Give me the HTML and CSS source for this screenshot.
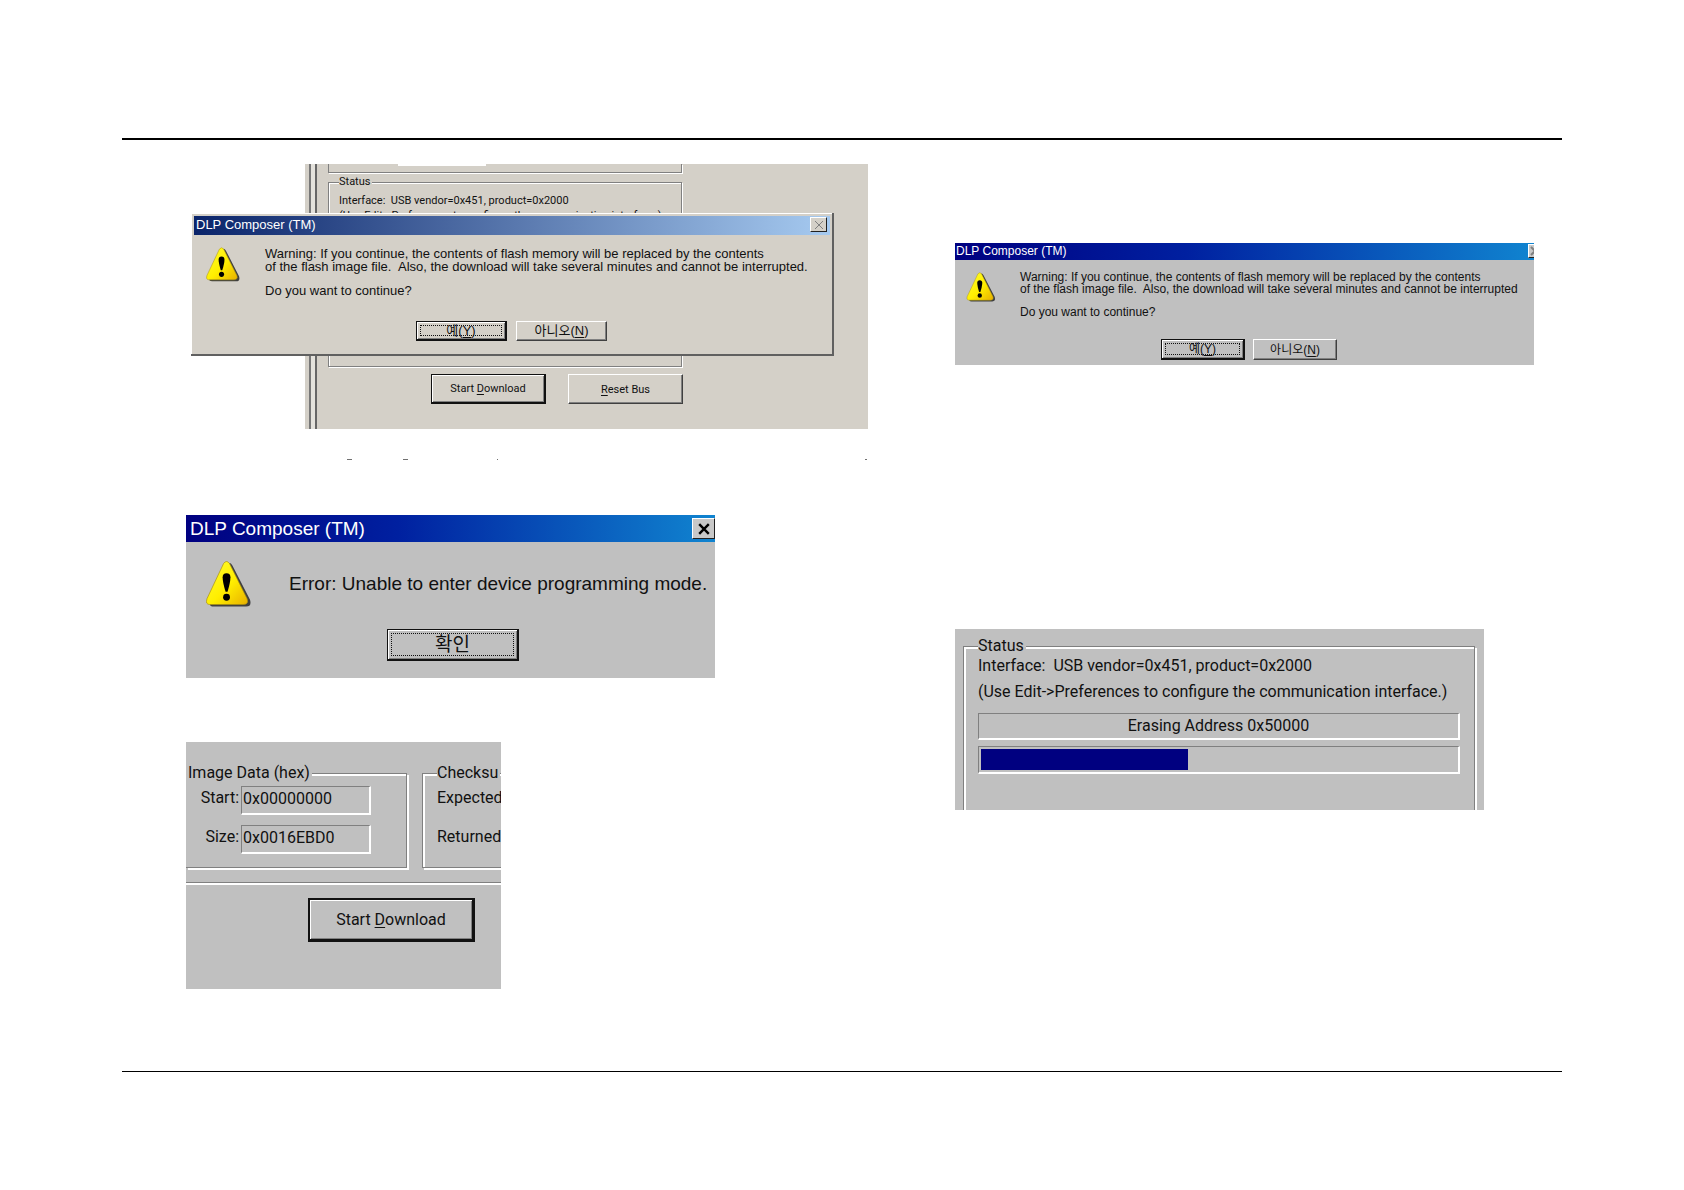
FILE: index.html
```html
<!DOCTYPE html>
<html lang="en">
<head>
<meta charset="utf-8">
<title>DLP Composer flash download</title>
<link rel="stylesheet" href="styles.css">
</head>
<body>
<svg class="defs" aria-hidden="true">
  <defs>
    <linearGradient id="sun" x1="0" y1="0" x2="1" y2="1">
      <stop offset="0" stop-color="#ffff30"/><stop offset=".55" stop-color="#ffee00"/><stop offset="1" stop-color="#e8b000"/>
    </linearGradient>
    <symbol id="warning" viewBox="0 0 46 48">
      <path class="shade" d="M21 5Q24 0 27 5L45 40Q47 47 41 47H8Q2 47 5 41Z"/>
      <path d="M18 3Q21 -1 24 3L42 39Q44 45 38 45H4Q-1 45 1 39Z" fill="url(#sun)" stroke="#a89010" stroke-width=".7"/>
      <path d="M17 17Q17 13 21 13T25 17Q25 22 22 32H20Q17 22 17 17Z"/>
      <circle cx="21" cy="37.500" r="3.500"/>
    </symbol>
  </defs>
</svg>
<div class="page">
  <main class="columns">
    <section class="column">
      <div class="scene">
        <div class="panel download">
          <div class="edge"></div>
          <div class="download-body">
            <div class="group-end"><div class="group-end-field"></div></div>
            <fieldset class="group status-small">
              <legend>Status</legend>
              <p>Interface:&nbsp; USB vendor=0x451, product=0x2000</p>
              <p>(Use Edit-&gt;Preferences to configure the communication interface.)</p>
              <div class="well"></div>
            </fieldset>
            <div class="download-actions">
              <button class="button default" type="button">Start <u>D</u>ownload</button>
              <button class="button" type="button"><u>R</u>eset Bus</button>
            </div>
          </div>
        </div>
        <div class="dialog warn-large" role="dialog" aria-label="DLP Composer (TM)">
          <div class="title"><span>DLP Composer (TM)</span>
            <button class="close" type="button" aria-label="Close"><svg viewBox="0 0 10 10"><path d="M1 1L9 9M9 1L1 9"/></svg></button>
          </div>
          <div class="message">
            <svg class="icon"><use href="#warning"/></svg>
            <div class="text">
              <p>Warning: If you continue, the contents of flash memory will be replaced by the contents<br>of the flash image file.&nbsp; Also, the download will take several minutes and cannot be interrupted.</p>
              <p>Do you want to continue?</p>
            </div>
          </div>
          <div class="answers">
            <button class="button default focus" type="button"><span>예(<u>Y</u>)</span></button>
            <button class="button" type="button">아니오(<u>N</u>)</button>
          </div>
        </div>
      </div>
      <svg class="remnants" viewBox="0 0 682 3" aria-hidden="true"><path d="M161 1.500h5M217 1.500h5M311 1.500h1M679 1.500h2"/></svg>

      <div class="panel error" role="dialog" aria-label="DLP Composer (TM)">
        <div class="title"><span>DLP Composer (TM)</span>
          <button class="close" type="button" aria-label="Close"><svg viewBox="0 0 10 10"><path d="M1 1L9 9M9 1L1 9"/></svg></button>
        </div>
        <div class="message">
          <svg class="icon"><use href="#warning"/></svg>
          <p>Error: Unable to enter device programming mode.</p>
        </div>
        <div class="answers">
          <button class="button default focus" type="button"><span>확인</span></button>
        </div>
      </div>

      <div class="panel image-data">
        <div class="groups">
          <fieldset class="group hex">
            <legend>Image Data (hex)</legend>
            <label for="start">Start:</label><input id="start" value="0x00000000" readonly>
            <label for="size">Size:</label><input id="size" value="0x0016EBD0" readonly>
          </fieldset>
          <fieldset class="group checksum">
            <legend>Checksu</legend>
            <p>Expected</p>
            <p>Returned</p>
          </fieldset>
        </div>
        <div class="divider"></div>
        <button class="button default" type="button">Start <u>D</u>ownload</button>
      </div>
    </section>

    <section class="column second">
      <div class="panel warn-small" role="dialog" aria-label="DLP Composer (TM)">
        <div class="title"><span>DLP Composer (TM)</span>
          <button class="close" type="button" aria-label="Close"><svg viewBox="0 0 10 10"><path d="M1 1L9 9M9 1L1 9"/></svg></button>
        </div>
        <div class="message">
          <svg class="icon"><use href="#warning"/></svg>
          <div class="text">
            <p>Warning: If you continue, the contents of flash memory will be replaced by the contents<br>of the flash image file.&nbsp; Also, the download will take several minutes and cannot be interrupted</p>
            <p>Do you want to continue?</p>
          </div>
        </div>
        <div class="answers">
          <button class="button default focus" type="button"><span>예(<u>Y</u>)</span></button>
          <button class="button" type="button">아니오(<u>N</u>)</button>
        </div>
      </div>

      <div class="panel progress-panel">
        <fieldset class="group status-large">
          <legend>Status</legend>
          <p>Interface:&nbsp; USB vendor=0x451, product=0x2000</p>
          <p>(Use Edit-&gt;Preferences to configure the communication interface.)</p>
          <label class="well" for="erase">Erasing Address 0x50000</label>
          <progress id="erase" value="435" max="1000"></progress>
        </fieldset>
      </div>
    </section>
  </main>
</div>
</body>
</html>
```
FILE: styles.css
```css
* { box-sizing: border-box; }

body {
  margin: 0;
  background: #fff;
  color: #111;
  font-family: Roboto, "Noto Sans CJK KR", sans-serif;
}

p { margin: 0; }
u { text-underline-offset: 2px; }
.defs { position: absolute; width: 0; height: 0; }
.shade { fill: #404040; }

/* Page frame */
.page { padding: 138px 122px 119px; }
.columns {
  display: grid;
  grid-template-columns: 769fr 607fr;
  padding: 24px 0 82px 64px;
  border-top: 2px solid #000;
  border-bottom: 1px solid #000;
}
.column { display: flex; flex-direction: column; align-items: flex-start; min-width: 0; }
.second { padding-top: 79px; }

/* Shared window parts */
.panel { background: #c0c0c0; overflow: hidden; white-space: nowrap; }

.warn-large, .warn-small, .error { font-family: "Liberation Sans", "Noto Sans CJK KR", sans-serif; }

.title {
  display: flex;
  align-items: center;
  justify-content: space-between;
  background: linear-gradient(90deg, #000080, #0020a0 40%, #1084d0);
  color: #fff;
}
.close {
  display: flex;
  align-items: center;
  justify-content: center;
  flex: none;
  padding: 0;
  background: #c8c8c8;
  border: 1px solid;
  border-color: #fff #202020 #202020 #fff;
}
.close svg { width: 10px; height: 10px; fill: none; stroke: #000; stroke-width: 2; }

.message { display: flex; align-items: flex-start; }
.icon { flex: none; }
.answers { display: flex; }

.button {
  display: block;
  padding: 0;
  background: transparent;
  border: 1px solid;
  border-color: #fff #404040 #404040 #fff;
  box-shadow: inset -1px -1px #808080;
  color: #111;
  font: inherit;
  text-align: center;
  white-space: nowrap;
}
.answers .button { line-height: 16px; }
.default {
  border: 1px solid #111;
  border-width: 1px 2px 2px 1px;
  box-shadow: inset 1px 1px #fff, inset -1px -1px #808080;
}
.focus { display: flex; padding: 3px; }
.focus span {
  display: flex;
  align-items: center;
  justify-content: center;
  flex: 1;
  align-self: stretch;
  border: 1px dotted #111;
}

.group {
  min-width: 0;
  margin: 0;
  padding: 0;
  border: 1px solid #808080;
  box-shadow: 1px 1px #fff, inset 1px 1px #fff;
}
.group legend { background: #c0c0c0; }
.well { border: 1px solid; border-color: #808080 #fff #fff #808080; }

/* Download panel with the confirmation over it */
.scene { position: relative; padding-left: 119px; }
.download {
  display: flex;
  width: 563px;
  height: 265px;
  background: #d4d0c8;
  font-size: 11px;
}
.edge {
  width: 12px;
  background: linear-gradient(90deg, #d4d0c8 4px, #777 4px 6px, #e4e2dc 6px 10px, #666 10px);
}
.download-body { width: 365px; padding-left: 11px; }
.group-end {
  height: 9px;
  padding-left: 69px;
  border: 1px solid #808080;
  border-top: 0;
  box-shadow: 1px 1px #fff;
}
.group-end-field { width: 88px; height: 2px; background: #fff; }
.status-small {
  display: flex;
  flex-direction: column;
  height: 192px;
  margin-top: 2px;
  padding: 4px 10px 10px;
}
.status-small legend { padding: 0 2px 0 0; line-height: 14px; background: #d4d0c8; }
.status-small p { line-height: 15px; }
.status-small .well { height: 40px; margin-top: auto; }
.download-actions { display: flex; gap: 22px; margin: 7px 0 0 103px; }
.download-actions .button { flex: none; width: 115px; height: 30px; }

.warn-large {
  position: absolute;
  left: 5px;
  top: 49px;
  width: 643px;
  padding: 3px 2px 13px 3px;
  background: #d4d0c8;
  border: 1px solid;
  border-color: #f0eee8 #606060 #606060 #d4d0c8;
  border-width: 0 2px 2px 0;
  box-shadow: inset 1px 1px #fff;
  font-size: 13px;
  white-space: nowrap;
}
.warn-large .title {
  height: 19px;
  padding: 0 3px 2px 2px;
  background: linear-gradient(90deg, #0a246a, #a6caf0);
}
.warn-large .close { width: 17px; height: 15px; background: #d4d0c8; }
.warn-large .close svg { stroke: #808080; stroke-width: 1; }
.warn-large .message { gap: 25px; padding: 12px 0 0 12px; }
.warn-large .icon { width: 34px; height: 35px; }
.warn-large .text { line-height: 13px; }
.warn-large .text p + p { margin-top: 11px; }
.warn-large .answers { gap: 9px; margin: 24px 0 0 222px; }
.warn-large .button { width: 91px; height: 20px; }

.remnants { width: 682px; height: 3px; margin-top: 29px; fill: none; stroke: #707070; }

/* Error dialog */
.error { width: 529px; height: 163px; margin-top: 54px; font-size: 19px; }
.error .title { height: 27px; padding-left: 4px; }
.error .close { width: 23px; height: 21px; }
.error .close svg { width: 12px; height: 12px; }
.error .message { align-items: center; gap: 38px; padding: 18px 0 0 20px; line-height: 22px; }
.error .icon { width: 45px; height: 48px; }
.error .answers { margin: 21px 0 0 201px; }
.error .button { width: 132px; height: 32px; }

/* Image data */
.image-data { width: 315px; height: 247px; margin-top: 64px; padding-top: 22px; font-size: 16px; }
.groups { display: flex; gap: 15px; }
.groups .group { flex: none; height: 104px; box-shadow: 2px 2px #fff, inset 2px 2px #fff; }
.groups legend { line-height: 18px; }
.groups .hex {
  display: grid;
  grid-template-columns: 53px 130px;
  grid-template-rows: 29px 29px;
  row-gap: 10px;
  column-gap: 2px;
  width: 221px;
  padding-top: 4px;
  border-left: 0;
  box-shadow: 2px 2px #fff, inset 0 2px #fff;
}
.hex legend { padding: 0 2px; }
.hex label { line-height: 24px; text-align: right; }
.hex input {
  width: 100%;
  padding: 0 0 4px 1px;
  background: transparent;
  border: 1px solid;
  border-color: #808080 #fff #fff #808080;
  border-width: 1px 2px 2px 1px;
  color: #111;
  font: inherit;
}
.checksum { width: 200px; padding: 6px 0 0 14px; }
.checksum legend { padding: 0 2px 0 0; }
.checksum p { margin-bottom: 19px; line-height: 20px; }
.divider { height: 3px; margin-top: 14px; border-top: 1px solid #808080; background: #fff; }
.image-data .button { width: 167px; height: 44px; margin: 13px 0 0 122px; border-width: 2px 3px 3px 2px; }

/* Cropped confirmation */
.warn-small { width: 579px; height: 122px; font-size: 12px; }
.warn-small .title { height: 17px; padding: 0 0 2px 1px; }
.warn-small .close { width: 14px; height: 14px; margin-right: -8px; }
.warn-small .close svg { stroke: #808080; }
.warn-small .message { gap: 24px; padding: 11px 0 0 11px; }
.warn-small .icon { width: 30px; height: 30px; margin-top: 1px; }
.warn-small .text { line-height: 12px; }
.warn-small .text p + p { margin-top: 11px; }
.warn-small .answers { gap: 8px; margin: 21px 0 0 206px; }
.warn-small .button { width: 84px; height: 21px; }

/* Erasing progress */
.progress-panel { width: 529px; height: 181px; margin-top: 264px; padding: 8px 9px 0 8px; font-size: 16px; }
.status-large { height: 190px; padding: 1px 14px 0; box-shadow: 2px 2px #fff, inset 2px 2px #fff; }
.status-large legend { padding: 0 2px 0 0; line-height: 18px; }
.status-large p { margin-bottom: 6px; line-height: 20px; }
.status-large .well {
  display: block;
  height: 27px;
  margin-top: 11px;
  border-width: 1px 2px 2px 1px;
  line-height: 24px;
  text-align: center;
}
progress {
  display: block;
  width: 100%;
  height: 28px;
  margin-top: 6px;
  padding: 2px;
  appearance: none;
  border: 1px solid;
  border-color: #808080 #fff #fff #808080;
  border-width: 1px 2px 2px 1px;
  background: transparent;
}
progress::-webkit-progress-bar { background: transparent; }
progress::-webkit-progress-value { background: #000080; }
```
